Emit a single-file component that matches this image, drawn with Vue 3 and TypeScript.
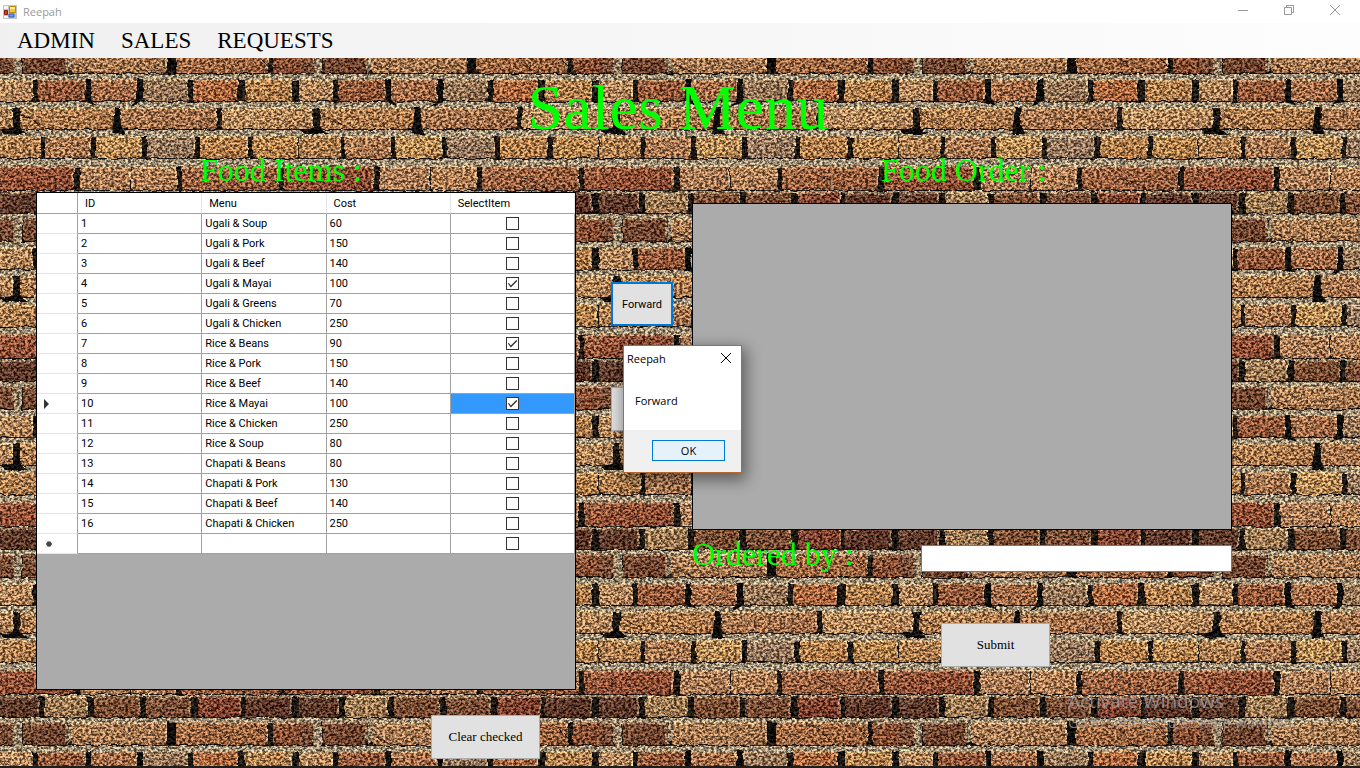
<script setup lang="ts">
import { ref } from 'vue'

interface FoodItem {
  id: number
  menu: string
  cost: number
  selected: boolean
}

const picked = new Set([4, 7, 10])
const currentId = 10

const items = ref<FoodItem[]>(
  ([
    ['Ugali & Soup', 60],
    ['Ugali & Pork', 150],
    ['Ugali & Beef', 140],
    ['Ugali & Mayai', 100],
    ['Ugali & Greens', 70],
    ['Ugali & Chicken', 250],
    ['Rice & Beans', 90],
    ['Rice & Pork', 150],
    ['Rice & Beef', 140],
    ['Rice & Mayai', 100],
    ['Rice & Chicken', 250],
    ['Rice & Soup', 80],
    ['Chapati & Beans', 80],
    ['Chapati & Pork', 130],
    ['Chapati & Beef', 140],
    ['Chapati & Chicken', 250],
  ] as [string, number][]).map(([menu, cost], i) => ({
    id: i + 1,
    menu,
    cost,
    selected: picked.has(i + 1),
  })),
)

const customer = ref('')
const dialogOpen = ref(true)

function clearChecked(): void {
  items.value.forEach((item) => (item.selected = false))
}

/* One repeat of the brick wall: each course has a top, a height and its bricks as [left, right, colour]. */
interface Course {
  y: number
  h: number
  bricks: [number, number, string][]
}

const courses: Course[] = [
  { y: 1, h: 21, bricks: [[-1, 39, '#583021'], [45, 88, '#9c7549'], [94, 140, '#754326'], [146, 191, '#74432a'], [198, 241, '#7c3622'], [245, 292, '#552b1e'], [299, 339, '#583021']] },
  { y: 27, h: 23, bricks: [[-27, 15, '#75452c'], [23, 67, '#6d3c25'], [72, 167, '#a87447'], [176, 268, '#a06136'], [273, 315, '#854426']] },
  { y: 56, h: 22, bricks: [[-1, 33, '#b58150'], [38, 85, '#95502d'], [91, 137, '#a6653c'], [143, 188, '#94704f'], [193, 238, '#b05f30'], [245, 292, '#b4793f'], [299, 333, '#b58150']] },
  { y: 84, h: 22, bricks: [[-78, 13, '#b78352'], [20, 115, '#b27742'], [121, 217, '#a76d42'], [222, 313, '#ba8550']] },
  { y: 113, h: 22, bricks: [[-1, 41, '#b07842'], [45, 91, '#ac7245'], [96, 142, '#bd8748'], [147, 195, '#937255'], [200, 248, '#b6783d'], [253, 298, '#b87d3e'], [299, 341, '#b07842']] },
  { y: 143, h: 24, bricks: [[-17, 74, '#91472a'], [80, 130, '#ad764c'], [131, 177, '#b3794a'], [182, 279, '#9b5934'], [284, 374, '#934c2c']] },
]
</script>

<template>
  <div class="window">
    <header class="titlebar">
      <svg class="app-icon" width="14" height="14" viewBox="0 0 14 14" aria-hidden="true">
        <path d="M0 0H14V14H0Z" fill="#c4c4c4" />
        <path d="M1 1H5V4H1ZM1 11H5V13H1Z" fill="#f5f5f5" />
        <path d="M6.500 1.500H12.500V7.500H6.500Z" fill="#f9c531" stroke="#b98a10" />
        <path d="M7 2H12V4H7Z" fill="#ffe590" />
        <path d="M1.500 5.500H4.500V9.500H1.500Z" fill="#d33c24" stroke="#93180c" />
        <path d="M6 9H11V12H6Z" fill="#6f9df0" stroke="#2c5cc4" />
      </svg>
      <span class="app-name">Reepah</span>
      <div class="window-controls">
        <button type="button" aria-label="Minimize">
          <svg width="12" height="12" viewBox="0 0 12 12"><path d="M1 6.500H11" /></svg>
        </button>
        <button type="button" aria-label="Restore">
          <svg width="12" height="12" viewBox="0 0 12 12"><path d="M1.500 3.500H8.500V10.500H1.500ZM3.500 3.500V1.500H10.500V8.500H8.500" /></svg>
        </button>
        <button type="button" aria-label="Close">
          <svg width="12" height="12" viewBox="0 0 12 12"><path d="M1 1L11 11M11 1L1 11" /></svg>
        </button>
      </div>
    </header>

    <div class="client">
      <svg class="wall" aria-hidden="true">
        <defs>
          <linearGradient id="brick-light" x1="0" y1="0" x2="1" y2="1">
            <stop offset="0" stop-color="#e8c08a" stop-opacity="0.2" />
            <stop offset="0.5" stop-color="#c87a3c" stop-opacity="0.05" />
            <stop offset="1" stop-color="#3a1008" stop-opacity="0.2" />
          </linearGradient>
          <pattern id="bricks" width="300" height="168" patternUnits="userSpaceOnUse">
            <rect width="300" height="168" fill="#a08d6e" />
            <g v-for="course in courses" :key="course.y">
              <rect x="0" :y="course.y + 1" width="300" :height="course.h" fill="#1c140c" />
              <template v-for="brick in course.bricks" :key="brick[0]">
                <rect :x="brick[0]" :y="course.y" :width="brick[1] - brick[0]" :height="course.h" rx="3" :fill="brick[2]" />
                <rect :x="brick[0]" :y="course.y" :width="brick[1] - brick[0]" :height="course.h" rx="3" fill="url(#brick-light)" />
                <path
                  :d="`M${brick[0] + 2} ${course.y + 1}H${brick[1] - 1}V${course.y + course.h - 3}`"
                  fill="none"
                  stroke="#e6cf98"
                  stroke-opacity="0.7"
                />
              </template>
            </g>
            <path d="M15 27H22V57H14ZM68 22H72V46L67 50ZM28 79H40V84H28Z" fill="#978161" />
            <path d="M74 41L96 51M206 28Q222 34 232 48M254 29L268 43M19 90L50 106M218 152L246 166" fill="none" stroke="#3a2012" stroke-width="1" />
            <path d="M0 107L13 105L17 98L22 107L28 111H5ZM115 84H120V100L125 111H112ZM137 56H143V79L130 84L137 77ZM86 56H91V76L97 83L86 79ZM167 26L176 28V50L167 45Z" fill="#0b0805" />
          </pattern>
          <filter id="grain" x="0" y="0" width="100%" height="100%" color-interpolation-filters="sRGB">
            <feTurbulence type="fractalNoise" baseFrequency="0.12" numOctaves="2" seed="4" result="warp" />
            <feDisplacementMap in="SourceGraphic" in2="warp" scale="4" xChannelSelector="R" yChannelSelector="G" result="rough" />
            <feTurbulence type="fractalNoise" baseFrequency="0.35 0.45" numOctaves="3" seed="9" />
            <feColorMatrix values="2.900 0 0 0 -0.950  2.800 0 0.100 0 -0.950  2.600 0 0.300 0 -0.950  0 0 0 0 1" result="noise" />
            <feComposite in="rough" in2="noise" operator="arithmetic" k1="0.800" k2="0.590" k3="0.180" k4="-0.080" />
            <feColorMatrix type="saturate" values="0.820" />
          </filter>
        </defs>
        <g filter="url(#grain)">
          <rect x="-1%" y="-2%" width="102%" height="104%" fill="url(#bricks)" />
        </g>
      </svg>

      <nav class="menubar">
        <a href="#admin">ADMIN</a>
        <a href="#sales">SALES</a>
        <a href="#requests">REQUESTS</a>
      </nav>

      <main class="content">
        <h1>Sales Menu</h1>
        <div class="columns">
          <section class="items">
            <h2>Food Items :</h2>
            <div class="grid-panel">
              <table>
                <colgroup>
                  <col class="col-head" />
                  <col />
                  <col />
                  <col />
                  <col />
                </colgroup>
                <thead>
                  <tr>
                    <th></th>
                    <th>ID</th>
                    <th>Menu</th>
                    <th>Cost</th>
                    <th>SelectItem</th>
                  </tr>
                </thead>
                <tbody>
                  <tr v-for="item in items" :key="item.id">
                    <td class="row-head">
                      <svg v-if="item.id === currentId" width="6" height="10" viewBox="0 0 6 10" aria-hidden="true">
                        <path d="M0 0L5 5L0 10Z" fill="#333" />
                      </svg>
                    </td>
                    <td>{{ item.id }}</td>
                    <td>{{ item.menu }}</td>
                    <td>{{ item.cost }}</td>
                    <td class="check" :class="{ current: item.id === currentId }">
                      <input v-model="item.selected" type="checkbox" :aria-label="`Select ${item.menu}`" />
                    </td>
                  </tr>
                  <tr>
                    <td class="row-head new-row">
                      <svg width="6" height="6" viewBox="0 0 6 6" aria-hidden="true">
                        <path d="M3 0V6M0 3H6M1 1L5 5M5 1L1 5" stroke="#444" stroke-width="1.300" />
                      </svg>
                    </td>
                    <td></td>
                    <td></td>
                    <td></td>
                    <td class="check"><input type="checkbox" aria-label="Select new item" /></td>
                  </tr>
                </tbody>
              </table>
            </div>
            <button type="button" class="push wide clear" @click="clearChecked">Clear checked</button>
          </section>

          <div class="transfer">
            <button type="button" class="push forward" @click="dialogOpen = true">Forward</button>
            <button type="button" class="push back" aria-label="Back"></button>
          </div>

          <section class="order">
            <h2>Food Order :</h2>
            <div class="order-panel"></div>
            <div class="ordered-by">
              <label for="customer">Ordered by :</label>
              <input id="customer" v-model="customer" type="text" />
            </div>
            <button type="button" class="push wide submit">Submit</button>
          </section>
        </div>
      </main>

      <aside class="watermark">
        <p class="watermark-title">Activate Windows</p>
        <p class="watermark-text">Go to Settings to activate Windows.</p>
      </aside>
    </div>

    <div v-if="dialogOpen" class="dialog" role="dialog" aria-labelledby="dialog-title">
      <div class="dialog-head">
        <span id="dialog-title">Reepah</span>
        <button type="button" aria-label="Close dialog" @click="dialogOpen = false">
          <svg width="12" height="12" viewBox="0 0 12 12"><path d="M1 1L11 11M11 1L1 11" /></svg>
        </button>
      </div>
      <p class="dialog-body">Forward</p>
      <div class="dialog-foot">
        <button type="button" class="ok" @click="dialogOpen = false">OK</button>
      </div>
    </div>
  </div>
</template>

<style>
body {
  margin: 0;
}
</style>

<style scoped>
* {
  box-sizing: border-box;
}

.window {
  position: relative;
  display: flex;
  flex-direction: column;
  min-height: 100vh;
  border-bottom: 2px solid #211c18;
  font-family: 'Open Sans', 'Noto Sans', sans-serif;
  font-size: 11px;
  color: #000;
  overflow: hidden;
}

.titlebar {
  display: flex;
  align-items: center;
  height: 23px;
  padding: 0 2px 0 3px;
  background: #fff;
}

.app-name {
  margin-left: 6px;
  color: #999;
}

.window-controls {
  display: flex;
  margin-left: auto;
}

.window-controls button {
  display: flex;
  align-items: center;
  justify-content: center;
  width: 46px;
  height: 20px;
  margin-bottom: 3px;
  padding: 0;
  border: 0;
  background: none;
}

.window-controls path {
  fill: none;
  stroke: #999;
}

.client {
  position: relative;
  display: flex;
  flex: 1;
  flex-direction: column;
}

.wall {
  position: absolute;
  inset: 0;
  width: 100%;
  height: 100%;
}

.menubar {
  position: relative;
  display: flex;
  align-items: center;
  gap: 26px;
  height: 35px;
  padding: 0 17px;
  background: linear-gradient(90deg, #f0f0f0, #fdfdfd);
  font-family: 'Liberation Serif', serif;
  font-size: 23px;
}

.menubar a {
  color: #000;
  text-decoration: none;
}

.content {
  position: relative;
  display: flex;
  flex: 1;
  flex-direction: column;
  padding: 13px 128px 7px 36px;
}

h1,
h2,
label {
  margin: 0;
  font-family: 'Liberation Serif', serif;
  font-weight: 400;
  color: #0f0;
}

h1 {
  margin-right: -92px;
  padding-right: 4px;
  font-size: 64px;
  line-height: 74px;
  text-align: center;
}

h2,
label {
  font-size: 32px;
  line-height: 36px;
  white-space: nowrap;
}

.columns {
  display: grid;
  flex: 1;
  grid-template-columns: minmax(0, 1fr) 116px minmax(0, 1fr);
  margin-top: 7px;
}

.items,
.order,
.transfer {
  display: flex;
  flex-direction: column;
}

.items h2 {
  padding-left: 164px;
}

.grid-panel {
  flex: 1;
  margin-top: 4px;
  border: 1px solid #000;
  background: #ababab;
}

table {
  width: 100%;
  table-layout: fixed;
  border-collapse: separate;
  border-spacing: 0;
  background: #fff;
  font-family: Roboto, sans-serif;
  font-size: 11px;
  line-height: 19px;
}

.col-head {
  width: 41px;
}

th,
td {
  height: 20px;
  padding: 0 3px;
  border-right: 1px solid #a0a0a0;
  border-bottom: 1px solid #a0a0a0;
  font-weight: 400;
  text-align: left;
}

th {
  height: 21px;
  padding: 0 7px;
  border-right-color: #e5e5e5;
}

th:first-child {
  border-right-color: #a0a0a0;
}

.row-head {
  padding: 0 7px;
  border-bottom-color: #e5e5e5;
  line-height: 0;
}

.new-row {
  padding-left: 9px;
}

.check {
  padding: 0;
  line-height: 0;
  text-align: center;
}

.current {
  background: #39f;
}

.check input {
  position: relative;
  width: 13px;
  height: 13px;
  margin: 0;
  border: 1px solid #333;
  background: #fff;
  appearance: none;
  vertical-align: middle;
}

.check input:checked::before {
  position: absolute;
  inset: 0;
  background: #333;
  clip-path: polygon(9% 50%, 18% 45%, 36% 68%, 86% 18%, 95% 27%, 36% 86%);
  content: '';
}

.push {
  height: 44px;
  padding: 0;
  border: 1px solid #adadad;
  background: #e1e1e1;
  color: #000;
}

.wide {
  width: 109px;
  font-family: 'Liberation Serif', serif;
  font-size: 13px;
}

.clear {
  align-self: flex-end;
  margin: 25px 36px 0 0;
}

.transfer {
  align-items: flex-start;
  gap: 61px;
  padding: 130px 0 0 35px;
}

.transfer .push {
  width: 62px;
}

.forward {
  border: 2px solid #0078d7;
  font-family: Roboto, sans-serif;
  font-size: 11px;
}

.order h2 {
  padding-left: 189px;
}

.order-panel {
  height: 327px;
  margin-top: 15px;
  border: 1px solid #000;
  background: #ababab;
}

.ordered-by {
  display: flex;
  align-items: flex-end;
  justify-content: space-between;
  margin-top: 6px;
}

.ordered-by input {
  width: 311px;
  height: 27px;
  padding: 0 4px;
  border: 1px solid #7a7a7a;
  background: #fff;
  font-family: 'Liberation Serif', serif;
  font-size: 16px;
}

.submit {
  margin: 51px 0 0 249px;
}

.watermark {
  position: absolute;
  right: 56px;
  bottom: 34px;
  width: 236px;
  color: rgba(165, 165, 165, 0.75);
  pointer-events: none;
}

.watermark p {
  margin: 0;
  white-space: nowrap;
}

.watermark-title {
  font-size: 19px;
  line-height: 26px;
}

.watermark-text {
  font-size: 14px;
  line-height: 18px;
}

.dialog {
  position: absolute;
  top: 345px;
  left: calc(50% - 57px);
  width: 119px;
  border: 1px solid #b5672f;
  background: #fff;
  box-shadow: 2px 5px 14px 2px rgba(0, 0, 0, 0.45);
}

.dialog-head {
  display: flex;
  align-items: center;
  justify-content: space-between;
  height: 24px;
  padding: 0 9px 0 3px;
}

.dialog-head button {
  display: flex;
  padding: 0;
  border: 0;
  background: none;
}

.dialog-head path {
  fill: none;
  stroke: #000;
}

.dialog-body {
  margin: 0;
  padding: 23px 11px 22px;
  line-height: 15px;
}

.dialog-foot {
  display: flex;
  justify-content: flex-end;
  padding: 10px 16px 11px;
  background: #f0f0f0;
}

.ok {
  width: 73px;
  height: 21px;
  padding: 0;
  border: 1px solid #0078d7;
  background: #e5f1fb;
  font-family: inherit;
  font-size: 11px;
  color: #000;
}
</style>
